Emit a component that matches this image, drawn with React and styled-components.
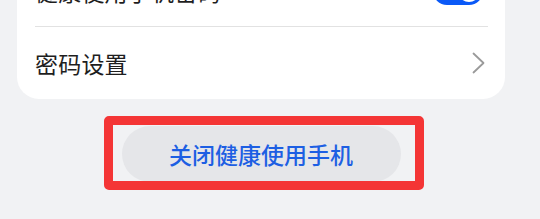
import React from 'react';
import styled, { createGlobalStyle } from 'styled-components';

const Global = createGlobalStyle`
    html, body {
        margin: 0;
        padding: 0;
        background: #f1f2f4;
        overflow: hidden;
    }
    body {
        font-family: "Noto Sans CJK SC", "Noto Sans", sans-serif;
    }
`;

const Page = styled.div`
    width: 540px;
    height: 219px;
    padding: 0 35px 0 17px;
    box-sizing: border-box;
    display: flex;
    flex-direction: column;
`;

const Card = styled.div`
    margin-top: -45px;
    background: #ffffff;
    border-radius: 22px;
    padding: 0 17px 0 18px;
    display: flex;
    flex-direction: column;
`;

const Row = styled.div`
    height: ${({ h }) => h}px;
    display: flex;
    align-items: center;
    justify-content: space-between;
    border-bottom: ${({ divider }) => (divider ? '1px solid #e2e2e2' : 'none')};
    box-sizing: border-box;
`;

const Label = styled.span`
    font-size: 23px;
    color: #1e1e1e;
    letter-spacing: 0.2px;
`;

const Toggle = styled.div`
    width: 50px;
    height: 28px;
    border-radius: 14px;
    background: #0a59f7;
    display: flex;
    align-items: center;
    justify-content: flex-end;
    padding: 3px;
    box-sizing: border-box;
    margin-right: 5px;
`;

const Knob = styled.div`
    width: 22px;
    height: 22px;
    border-radius: 50%;
    background: #ffffff;
`;

const Chevron = styled.svg`
    width: 13px;
    height: 22px;
    margin-right: 3px;
`;

const ButtonWrap = styled.div`
    position: relative;
    align-self: center;
    margin-top: 27px;
`;

const Pill = styled.button`
    width: 279px;
    height: 56px;
    border: none;
    border-radius: 28px;
    background: #e5e6e9;
    color: #1d5fe3;
    font-family: "Noto Sans CJK SC", "Noto Sans", sans-serif;
    font-size: 23px;
    font-weight: 500;
    padding: 0;
    display: flex;
    align-items: center;
    justify-content: center;
`;

const Highlight = styled.div`
    position: absolute;
    left: -18px;
    right: -23px;
    top: -10px;
    bottom: -8px;
    border: 9px solid #f43535;
    border-radius: 5px;
    pointer-events: none;
`;

export default function App() {
    return (
        <>
            <Global />
            <Page>
                <Card>
                    <Row h={72} divider>
                        <Label>健康使用手机密码</Label>
                        <Toggle>
                            <Knob />
                        </Toggle>
                    </Row>
                    <Row h={72}>
                        <Label>密码设置</Label>
                        <Chevron viewBox="0 0 13 22" fill="none">
                            <polyline points="1.5,1.5 11.5,11 1.5,20.5" stroke="#9a9a9a" strokeWidth="1.8" strokeLinecap="round" strokeLinejoin="round" />
                        </Chevron>
                    </Row>
                </Card>
                <ButtonWrap>
                    <Pill>关闭健康使用手机</Pill>
                    <Highlight />
                </ButtonWrap>
            </Page>
        </>
    );
}
